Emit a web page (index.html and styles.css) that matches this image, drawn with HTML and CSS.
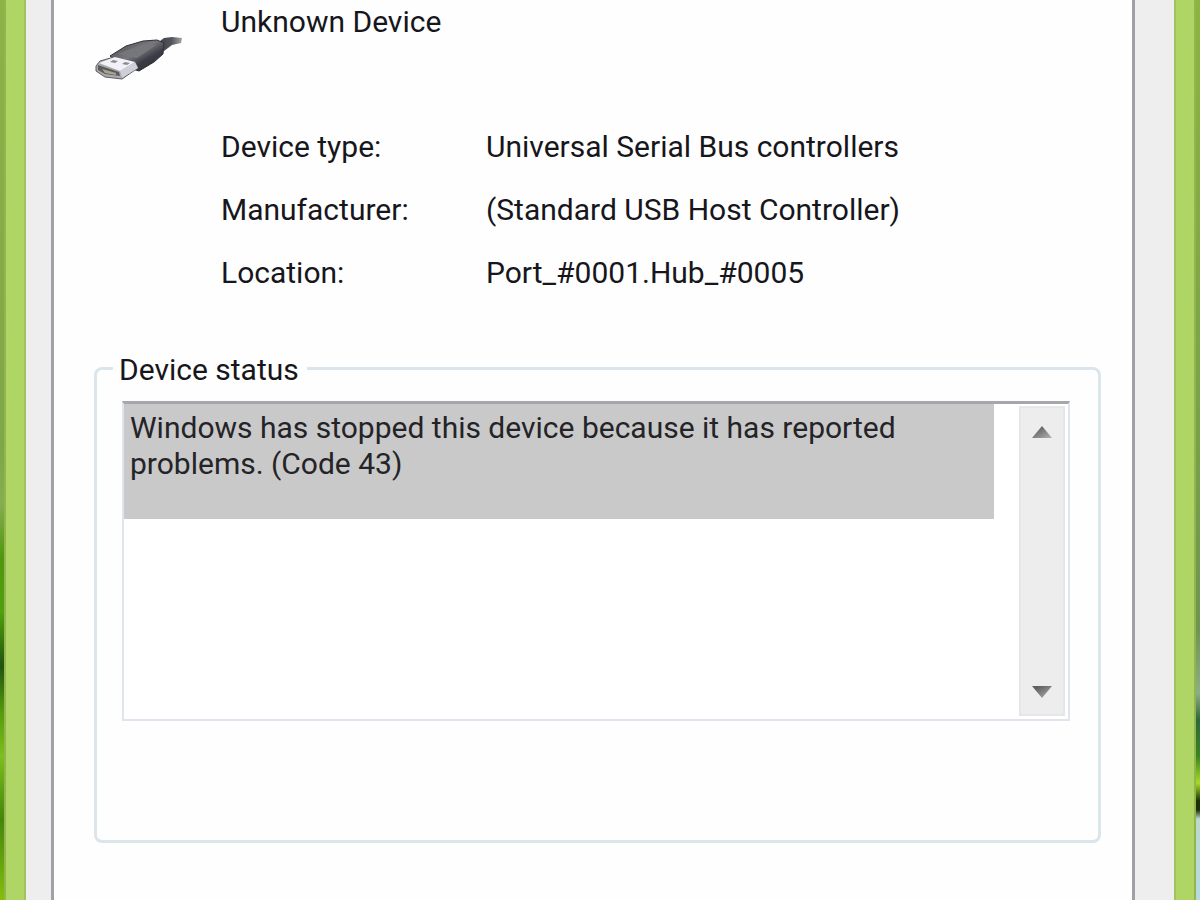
FILE: index.html
```html
<!DOCTYPE html>
<html lang="en">
<head>
    <meta charset="UTF-8">
    <meta name="viewport" content="width=device-width, initial-scale=1.0">
    <title>Unknown Device Properties</title>
    <link rel="stylesheet" href="styles.css">
</head>
<body>

<div class="desktop desktop-left"></div>
<main class="window">
    <section class="panel">
        <header class="device">
            <svg class="device-icon" viewBox="0 0 92 48" aria-hidden="true">
                <defs>
                    <linearGradient id="shell" x1="0" y1="0" x2="1" y2="1">
                        <stop offset="0" stop-color="#45454b"/>
                        <stop offset="0.45" stop-color="#77777c"/>
                        <stop offset="0.65" stop-color="#3d3d47"/>
                        <stop offset="1" stop-color="#292933"/>
                    </linearGradient>
                    <linearGradient id="cord" x1="0" y1="0" x2="1" y2="0">
                        <stop offset="0" stop-color="#393942"/>
                        <stop offset="0.6" stop-color="#55555c"/>
                        <stop offset="1" stop-color="#a5a5a8"/>
                    </linearGradient>
                </defs>
                <path d="M62 11 L70 5 L78 4 L88 5 L87 10 L78 12 L70 18 Z" fill="url(#cord)"/>
                <path d="M16 23 L32 13 L49 8 L63 7 L70 10 L69 21 L60 29 L45 38 L32 34 Z" fill="url(#shell)" stroke="#303038" stroke-width="1"/>
                <path d="M24 21 L50 11 L62 12 L43 25 Z" fill="#77777b"/>
                <path d="M2 33 L6 28 L20 24 L41 29 L44 35 L28 46 L11 44 L2 38 Z" fill="#a8a9b2" stroke="#5c5c64" stroke-width="1"/>
                <path d="M5 30 L21 24 L41 29 L26 38 Z" fill="#f1f1f7"/>
                <path d="M26 38 L41 29 L44 35 L28 45 Z" fill="#cecfd9"/>
                <path d="M19 27 L24 28 L21 30 L16 29 Z M31 29 L36 30 L33 32 L28 31 Z" fill="#8a8a94"/>
                <path d="M4 32 L25 39 L26 43 L11 41 L4 37 Z" fill="#5d5b59"/>
                <path d="M8 36 L22 40 L22 42 L11 40 Z" fill="#aaa58d"/>
            </svg>
            <h1 class="device-name">Unknown Device</h1>
        </header>

        <dl class="details">
            <dt>Device type:</dt>
            <dd>Universal Serial Bus controllers</dd>
            <dt>Manufacturer:</dt>
            <dd>(Standard USB Host Controller)</dd>
            <dt>Location:</dt>
            <dd>Port_#0001.Hub_#0005</dd>
        </dl>

        <fieldset class="status">
            <legend id="status-label">Device status</legend>
            <div class="status-box">
                <textarea class="status-text" aria-labelledby="status-label" rows="3" readonly>Windows has stopped this device because it has reported problems. (Code 43)</textarea>
                <div class="scrollbar">
                    <button type="button" class="scroll-button" aria-label="Scroll up">
                        <svg viewBox="0 0 20 12">
                            <defs>
                                <linearGradient id="arrow" x1="0" y1="0" x2="1" y2="1">
                                    <stop offset="0.2" stop-color="#606060"/>
                                    <stop offset="1" stop-color="#b4b4b4"/>
                                </linearGradient>
                            </defs>
                            <path d="M10 0 L20 12 H0 Z" fill="url(#arrow)"/>
                        </svg>
                    </button>
                    <button type="button" class="scroll-button" aria-label="Scroll down">
                        <svg viewBox="0 0 20 12"><path d="M0 0 H20 L10 12 Z" fill="url(#arrow)"/></svg>
                    </button>
                </div>
            </div>
        </fieldset>
    </section>
</main>
<div class="desktop desktop-right"></div>

</body>
</html>
```

FILE: styles.css
```css
* {
    box-sizing: border-box;
}

body {
    margin: 0;
    min-height: 100vh;
    display: flex;
    background-color: #afd665;
    color: #16161c;
    font-family: "Roboto", "Liberation Sans", sans-serif;
    font-size: 30px;
    line-height: 36px;
}

/* strips of wallpaper either side of the window */
.desktop {
    width: 6px;
}

.desktop-left {
    border-right: 2px solid #94b450;
    background: linear-gradient(to bottom, #8db246 0%, #7fa648 50%, #86ad50 56%, #4f970d 62%, #52a00c 68%, #1f5410 74%, #55980c 79%, #7bc01c 84%, #45850b 91%, #84bf0c 100%);
}

.desktop-right {
    border-left: 2px solid #94b450;
    background: linear-gradient(to bottom, #8db43f 0%, #79a048 50%, #6e9550 70%, #8caf84 77%, #2f6838 80%, #398420 84%, #a5dc22 87%, #1c3006 89%, #1c3006 90%, #bbd9cc 91%, #b6dae0 100%);
}

.window {
    flex: 1;
    display: flex;
    margin: 0 18px;
    padding: 0 39px 0 25px;
    border: solid #a4c260;
    border-width: 0 2px;
    background-color: #eeeeee;
}

.panel {
    flex: 1;
    padding: 4px 31px 57px 40px;
    border: solid #a0a0aa;
    border-width: 0 3px;
    background-color: #fefefe;
}

.device {
    display: flex;
    height: 125px;
}

.device-icon {
    width: 92px;
    height: 48px;
    margin: 29px 35px 0 0;
}

.device-name {
    margin: 0;
    font-size: 30px;
    font-weight: normal;
}

.details {
    display: grid;
    grid-template-columns: 265px 1fr;
    row-gap: 27px;
    margin: 0 0 57px 127px;
}

.details dd {
    margin: 0;
}

.status {
    min-width: 0;
    margin: 0;
    padding: 0 28px 119px 16px;
    border: 3px solid #dbe5ec;
    border-radius: 8px;
}

.status legend {
    padding: 4px 8px 0 6px;
}

.status-box {
    display: flex;
    align-items: flex-start;
    height: 320px;
    margin: 13px 0 0 9px;
    padding-right: 3px;
    border: 2px solid #e0e4ef;
    border-top: 3px solid #a6a6ad;
    background-color: #ffffff;
}

.status-text {
    flex: 1;
    display: block;
    height: 115px;
    margin: 0 25px 0 0;
    padding: 6px;
    border: none;
    outline: none;
    resize: none;
    overflow: hidden;
    background-color: #c9c9c9;
    color: #242428;
    font: inherit;
}

.scrollbar {
    display: flex;
    flex-direction: column;
    justify-content: space-between;
    align-self: stretch;
    width: 46px;
    margin: 2px 0 3px;
    padding-top: 2px;
    border: 2px solid #e6e6e6;
    background-color: #ededed;
}

.scroll-button {
    display: flex;
    align-items: center;
    justify-content: center;
    height: 44px;
    padding: 0;
    border: none;
    background: none;
    cursor: pointer;
}

.scroll-button svg {
    width: 20px;
    height: 12px;
}
```
